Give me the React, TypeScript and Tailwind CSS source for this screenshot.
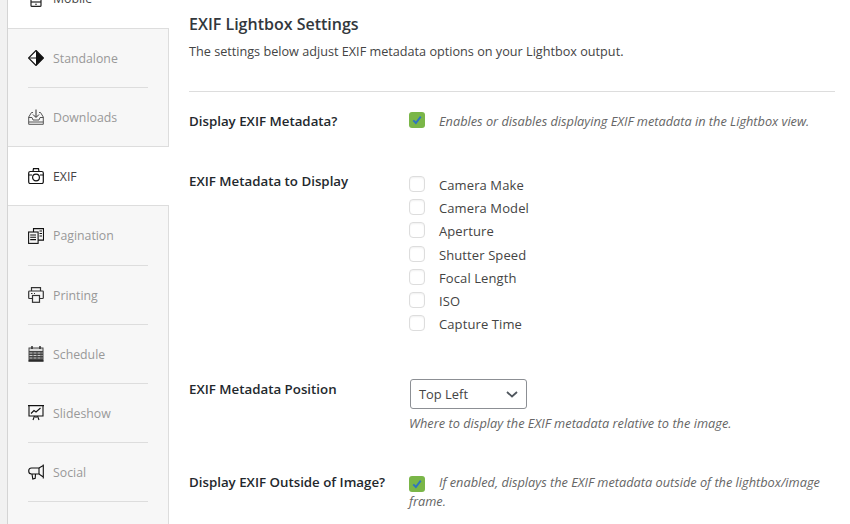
import React from "react";

const Icon = ({ name }: { name: string }) => {
  const c = "w-4 h-4 shrink-0";
  switch (name) {
    case "mobile":
      return (
        <svg className={c} viewBox="0 0 16 16" fill="none" stroke="#222" strokeWidth="1.200">
          <rect x="3" y="0" width="10" height="15.400" rx="1" />
          <path d="M3 11h10" />
          <circle cx="8" cy="13.300" r=".8" fill="#222" stroke="none" />
        </svg>
      );
    case "standalone":
      return (
        <svg className={c} viewBox="0 0 16 16">
          <path d="M8 .5 15.500 8 8 15.500.5 8Z" fill="#fff" stroke="#111" strokeWidth="1.200" />
          <path d="M8 .5 15.500 8 8 15.500Z" fill="#111" />
          <path d="M1 8h7" stroke="#111" strokeWidth="1" />
        </svg>
      );
    case "downloads":
      return (
        <svg className={c} viewBox="0 0 16 16" fill="none" stroke="#555" strokeWidth="1">
          <path d="M5 3.500H3.500L.7 8v7.300h14.600V8L12.500 3.500H11" />
          <path d="M.7 8.500h3.300l1 2.500h6l1-2.500h3.300" />
          <path d="M.7 13h14.600" />
          <path d="M8 .5v7.500M5 5.500 8 8.500 11 5.500" stroke="#333" />
        </svg>
      );
    case "exif":
      return (
        <svg className={c} viewBox="0 0 16 16" fill="none" stroke="#111" strokeWidth="1.200">
          <rect x=".7" y="3.500" width="14.600" height="12" rx="1.500" />
          <path d="M.7 7h3.300M12 7h3.300M5 3.500l.5-2.800h5l.5 2.800M2 3.500h12" />
          <circle cx="8" cy="9.500" r="3.400" />
        </svg>
      );
    case "pagination":
      return (
        <svg className={c} viewBox="0 0 16 16" fill="none" stroke="#111" strokeWidth="1.100">
          <path d="M5.500 4V.6h10v11.500H10" />
          <rect x=".6" y="4" width="9.500" height="11.400" fill="#f7f7f7" />
          <path d="M2.200 7h5.800M2.200 9.300h5.800M2.200 11.600h5.800M11.500 3h2.500M11.500 5.500h2.500M11.500 8h2.500" />
        </svg>
      );
    case "printing":
      return (
        <svg className={c} viewBox="0 0 16 16" fill="none" stroke="#333" strokeWidth="1.200">
          <path d="M3.500 4V.7h9V4" />
          <path d="M4 11.500H1.500q-.8 0-.8-.8V4.800q0-.8.8-.8h13q.8 0 .8.8v5.900q0 .8-.8.8H12" />
          <rect x="4.500" y="8.500" width="7" height="6.800" />
          <path d="M3 6.500h1.500M6 6.500h1" />
        </svg>
      );
    case "schedule":
      return (
        <svg className={c} viewBox="0 0 16 16">
          <rect x=".5" y="1.500" width="15" height="14" fill="#444" />
          <rect x="1.500" y="2.500" width="13" height="2.500" fill="#ddd" />
          <path d="M4 0v3M12 0v3" stroke="#222" strokeWidth="1.400" />
          <path d="M1.500 7h13M1.500 9.500h13M1.500 12h13" stroke="#ccc" strokeWidth="1" strokeDasharray="3 1" />
          <path d="M.5 15h15" stroke="#111" strokeWidth="1" />
        </svg>
      );
    case "slideshow":
      return (
        <svg className={c} viewBox="0 0 16 16" fill="none" stroke="#111" strokeWidth="1.100">
          <path d="M0 .6h16" strokeWidth="1.300" />
          <path d="M1 .6v10.400h14V.6" />
          <path d="M3 8.500 6 5.500l2 1.500 4.500-4M6.500 11l-1.500 4M9.500 11l1.500 4M8 11v2" />
        </svg>
      );
    default:
      return (
        <svg className={c} viewBox="0 0 16 16" fill="none" stroke="#111" strokeWidth="1.100">
          <path d="M15.300.6v13.800M15.300 1.500 11 4H3.500C1.800 4 .7 5.500.7 7s1.100 3 2.800 3H11l4.300 3" />
          <path d="M11 4v6M4 10l.8 5 2.400-.6.300-4.400" />
        </svg>
      );
  }
};

const Tab = ({ name, label, h, line = true }: { name: string; label: string; h: string; line?: boolean }) => (
  <div className={`px-5 ${h}`}>
    <div className={`h-full flex items-center gap-[9px] ${line ? "border-b border-[#dddddd]" : ""}`}>
      <Icon name={name} />
      <span className={`mt-[2px] text-[12.300px] ${!line && (name === "exif" || name === "mobile") ? "text-[#444444]" : "text-[#999999]"}`}>
        {label}
      </span>
    </div>
  </div>
);

const Gray = ({ children }: { children: React.ReactNode }) => (
  <div className="bg-[#f7f7f7] border-r border-y border-[#dddddd]">{children}</div>
);

const Check = () => (
  <span className="w-4 h-4 rounded-[3px] bg-[#7ab648] flex items-center justify-center shrink-0">
    <svg viewBox="0 0 16 16" className="w-3 h-3" fill="none" stroke="#2f74c0" strokeWidth="2.600">
      <path d="M3 8.500 6.500 12 13 3.500" />
    </svg>
  </span>
);

const Box = ({ label }: { label: string }) => (
  <div className="h-[23.170px] flex items-center gap-[14px]">
    <span className="w-4 h-4 -mt-[2px] rounded-[4px] bg-white border border-[#dddddd] shadow-[inset_0_1px_2px_rgba(0,0,0,0.06)] shrink-0" />
    <span className="mt-[1px] text-[13px] text-[#444444] leading-none tracking-[0.1px]">{label}</span>
  </div>
);

const Hint = ({ children, className = "" }: { children: React.ReactNode; className?: string }) => (
  <p className={`text-[12.750px] italic text-[#666666] ${className}`}>{children}</p>
);

const Label = ({ children }: { children: React.ReactNode }) => (
  <div className="w-[220px] shrink-0 text-[13.300px] font-semibold text-[#23282d] leading-5">{children}</div>
);

export default function App() {
  return (
    <div
      className="w-[850px] h-[524px] overflow-hidden bg-white flex"
      style={{ fontFamily: '"Open Sans", "Noto Sans", sans-serif' }}
    >
      <div className="w-[8px] shrink-0 bg-[#f1f1f1] border-r border-[#d4d4d4]" />
      <aside className="w-[161px] shrink-0 -mt-[31px]">
        <Tab name="mobile" label="Mobile" h="h-[59px]" line={false} />
        <Gray>
          <Tab name="standalone" label="Standalone" h="h-[59px]" />
          <Tab name="downloads" label="Downloads" h="h-[58px]" line={false} />
        </Gray>
        <Tab name="exif" label="EXIF" h="h-[58px]" line={false} />
        <Gray>
          <Tab name="pagination" label="Pagination" h="h-[60px]" />
          <Tab name="printing" label="Printing" h="h-[59px]" />
          <Tab name="schedule" label="Schedule" h="h-[59px]" />
          <Tab name="slideshow" label="Slideshow" h="h-[59px]" />
          <Tab name="social" label="Social" h="h-[59px]" />
          <div className="h-[60px]" />
        </Gray>
      </aside>
      <main className="w-[646px] ml-[20px] shrink-0 pt-[14px]">
        <h2 className="text-[16px] font-semibold text-[#32373c] leading-5">EXIF Lightbox Settings</h2>
        <p className="mt-[7px] text-[12.670px] text-[#444444] leading-5">
          The settings below adjust EXIF metadata options on your Lightbox output.
        </p>
        <div className="mt-[30px] border-t border-[#dddddd]" />
        <div className="flex mt-[19px] h-[60px]">
          <Label>Display EXIF Metadata?</Label>
          <div className="flex gap-[14px] items-start h-5">
            <span className="mt-[1px]">
              <Check />
            </span>
            <Hint className="leading-5">Enables or disables displaying EXIF metadata in the Lightbox view.</Hint>
          </div>
        </div>
        <div className="flex h-[208px]">
          <Label>EXIF Metadata to Display</Label>
          <div className="pt-[2.600px]">
            <Box label="Camera Make" />
            <Box label="Camera Model" />
            <Box label="Aperture" />
            <Box label="Shutter Speed" />
            <Box label="Focal Length" />
            <Box label="ISO" />
            <Box label="Capture Time" />
          </div>
        </div>
        <div className="flex h-[93px]">
          <Label>EXIF Metadata Position</Label>
          <div>
            <div className="w-[117px] h-[30px] ml-[1px] rounded-[3px] border border-[#8c8f94] bg-white flex items-center justify-between pl-2 pr-[6px]">
              <span className="mt-[2px] text-[12.900px] text-[#444444]">Top Left</span>
              <svg viewBox="0 0 16 16" className="w-4 h-4" fill="none" stroke="#50575e" strokeWidth="1.800">
                <path d="M3 6l5 4.500L13 6" />
              </svg>
            </div>
            <Hint className="mt-[4px] leading-5 tracking-[0.03px]">Where to display the EXIF metadata relative to the image.</Hint>
          </div>
        </div>
        <div className="flex">
          <Label>Display EXIF Outside of Image?</Label>
          <div className="w-[416px] pt-[1px]">
            <Hint className="leading-[19px]">
              <span className="inline-block align-[-3px] mr-[14px]">
                <Check />
              </span>
              If enabled, displays the EXIF metadata outside of the lightbox/image frame.
            </Hint>
          </div>
        </div>
      </main>
    </div>
  );
}
